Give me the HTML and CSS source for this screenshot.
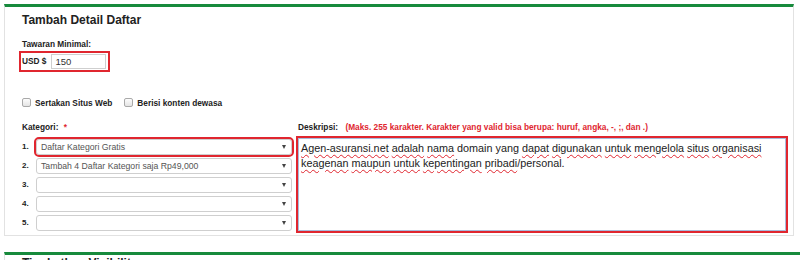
FILE: index.html
```html
<!DOCTYPE html>
<html lang="id">
<head>
  <meta charset="UTF-8" />
  <meta name="viewport" content="width=device-width, initial-scale=1.0"/>
  <title>Tambah Detail Daftar</title>
  <link rel="stylesheet" href="styles.css">
</head>
<body>

<div class="panel">
  <h3>Tambah Detail Daftar</h3>

  <div class="field-label">Tawaran Minimal:</div>
  <div class="price-box highlight">
    <span class="currency">USD $</span>
    <input type="text" class="price-input" value="150" />
  </div>

  <div class="check-row">
    <label class="check"><span class="box"></span>Sertakan Situs Web</label>
    <label class="check"><span class="box"></span>Berisi konten dewasa</label>
  </div>

  <div class="detail-grid">
    <div class="cat-col">
      <div class="field-label">Kategori: <span class="req">*</span></div>
      <div class="cat-list">
        <div class="cat-row">
          <span class="num">1.</span>
          <div class="select selected">Daftar Kategori Gratis</div>
        </div>
        <div class="cat-row">
          <span class="num">2.</span>
          <div class="select">Tambah 4 Daftar Kategori saja Rp49,000</div>
        </div>
        <div class="cat-row">
          <span class="num">3.</span>
          <div class="select"></div>
        </div>
        <div class="cat-row">
          <span class="num">4.</span>
          <div class="select"></div>
        </div>
        <div class="cat-row">
          <span class="num">5.</span>
          <div class="select"></div>
        </div>
      </div>
    </div>

    <div class="desc-col">
      <div class="field-label">Deskripsi: <span class="hint">(Maks. 255 karakter. Karakter yang valid bisa berupa: huruf, angka, -, ;, dan .)</span></div>
      <div class="desc-wrap">
        <div class="desc-box"><span class="typo">Agen-asuransi.net</span> <span class="typo">adalah</span> <span class="typo">nama</span> domain yang <span class="typo">dapat</span> <span class="typo">digunakan</span> <span class="typo">untuk</span> <span class="typo">mengelola</span> <span class="typo">situs</span> <span class="typo">organisasi</span> <span class="typo">keagenan</span> <span class="typo">maupun</span> <span class="typo">untuk</span> <span class="typo">kepentingan</span> <span class="typo">pribadi</span>/personal.</div>
      </div>
    </div>
  </div>
</div>

<div class="panel next">
  <h3>Tingkatkan Visibilitas</h3>
</div>

</body>
</html>
```

FILE: styles.css
```css
:root {
  --green: #178a3c;
  --red: #e0262f;
  --border: #e2e2e2;
  --field: #cfcfcf;
  --text: #222;
}

* {
  box-sizing: border-box;
}

body {
  margin: 0;
  background: #fff;
  color: var(--text);
  font-family: 'Liberation Sans', Arial, sans-serif;
  overflow: hidden;
}

.panel {
  margin: 4px 0 0 4px;
  width: 790px;
  border: 1px solid var(--border);
  border-top: 3px solid var(--green);
  padding: 5px 17px 2px;
}

.panel h3 {
  margin: 0 0 10px;
  font-size: 12px;
  line-height: 16px;
  font-weight: bold;
}

.panel.next {
  margin-top: 16px;
  width: 800px;
  border-right: none;
  padding-top: 0;
}

.field-label {
  font-size: 8.3px;
  font-weight: bold;
  line-height: 12px;
}

.req,
.hint {
  color: var(--red);
}

.req {
  margin-left: 3px;
}

.hint {
  margin-left: 5px;
}

.highlight {
  border: 2px solid var(--red);
}

.price-box {
  display: inline-flex;
  align-items: center;
  gap: 5px;
  margin-left: -3px;
  padding: 1px 2px 1px 1px;
}

.currency {
  font-size: 8.3px;
  font-weight: bold;
}

.price-input {
  width: 55px;
  height: 15px;
  border: 1px solid var(--field);
  padding: 0 3px;
  font-family: inherit;
  font-size: 9.5px;
  color: #333;
}

.check-row {
  display: flex;
  gap: 12px;
  margin-top: 24px;
  font-size: 8.3px;
  font-weight: bold;
  line-height: 14px;
}

.check {
  display: flex;
  align-items: center;
  gap: 4px;
}

.check .box {
  width: 9px;
  height: 9px;
  border: 1px solid #a9a9a9;
  border-radius: 2px;
  background: linear-gradient(#fdfdfd, #e4e4e4);
}

.detail-grid {
  display: grid;
  grid-template-columns: 274px 492px;
  margin-top: 11px;
}

.cat-list {
  display: flex;
  flex-direction: column;
  gap: 3px;
  margin-top: 6px;
}

.cat-row {
  display: flex;
  align-items: center;
}

.num {
  width: 14px;
  font-size: 8px;
  font-weight: bold;
}

.select {
  position: relative;
  width: 256px;
  height: 16px;
  border: 1px solid var(--field);
  border-radius: 3px;
  padding-left: 4px;
  font-size: 8.7px;
  line-height: 14px;
  color: #555;
}

.select::after {
  content: "";
  position: absolute;
  right: 5px;
  top: 5px;
  border-left: 2.5px solid transparent;
  border-right: 2.5px solid transparent;
  border-top: 4px solid #444;
}

.select.selected {
  outline: 2px solid var(--red);
}

.desc-col .field-label {
  padding-left: 2px;
}

.desc-wrap {
  margin-top: 3px;
  height: 97px;
  border: 2px solid var(--red);
}

.desc-box {
  height: 100%;
  border: 1px solid #a7bcdc;
  padding: 2px 2px;
  font-size: 10.8px;
  line-height: 15px;
  color: #222;
}

.typo {
  text-decoration: underline wavy #e0262f;
  text-decoration-thickness: 1px;
  text-underline-offset: 2px;
}
```
